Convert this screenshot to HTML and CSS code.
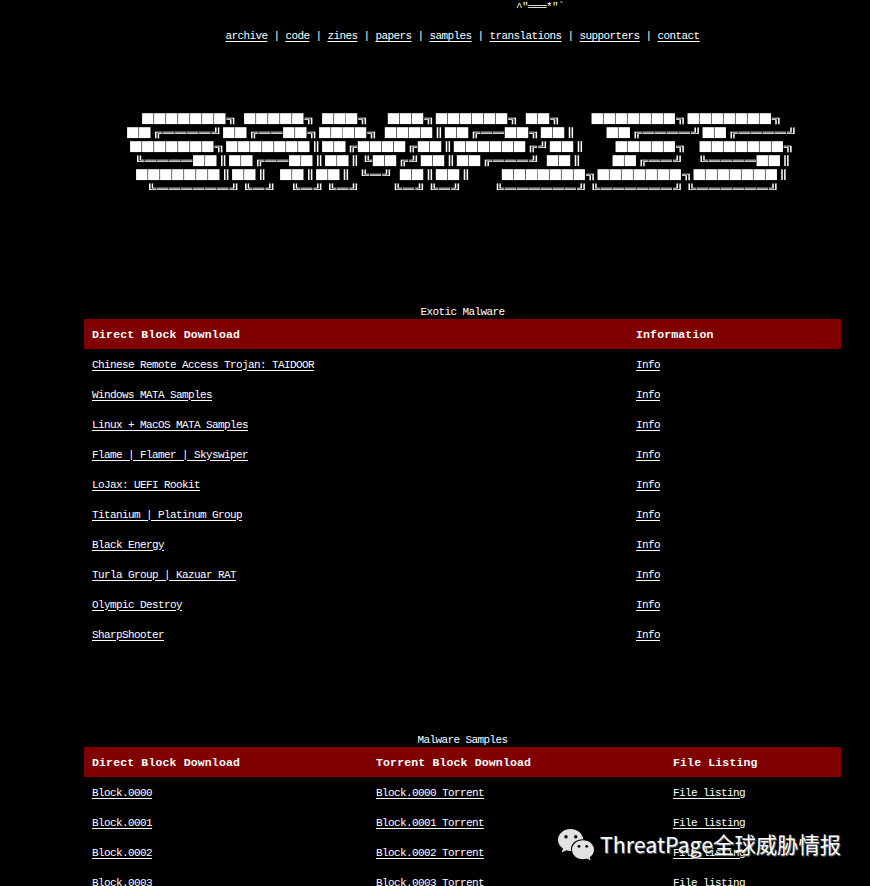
FILE: index.html
```html
<!DOCTYPE html>
<html lang="en">
<head>
<meta charset="utf-8">
<title>Samples</title>
<link rel="stylesheet" href="styles.css">
</head>
<body>
<main class="page">
<div class="ornament">^"═══*"`</div>
<nav class="nav"><a href="#">archive</a> | <a href="#">code</a> | <a href="#">zines</a> | <a href="#">papers</a> | <a href="#">samples</a> | <a href="#">translations</a> | <a href="#">supporters</a> | <a href="#">contact</a></nav>
<pre class="banner">███████╗ █████╗ ███╗   ███╗██████╗ ██╗     ███████╗███████╗
██╔════╝██╔══██╗████╗ ████║██╔══██╗██║     ██╔════╝██╔════╝
███████╗███████║██╔████╔██║██████╔╝██║     █████╗  ███████╗
╚════██║██╔══██║██║╚██╔╝██║██╔═══╝ ██║     ██╔══╝  ╚════██║
███████║██║  ██║██║ ╚═╝ ██║██║     ███████╗███████╗███████║
╚══════╝╚═╝  ╚═╝╚═╝     ╚═╝╚═╝     ╚══════╝╚══════╝╚══════╝</pre>
<table class="listing exotic">
<caption>Exotic Malware</caption>
<thead><tr><th class="wide">Direct Block Download</th><th>Information</th></tr></thead>
<tbody>
<tr><td><a href="#">Chinese Remote Access Trojan: TAIDOOR</a></td><td><a href="#">Info</a></td></tr>
<tr><td><a href="#">Windows MATA Samples</a></td><td><a href="#">Info</a></td></tr>
<tr><td><a href="#">Linux + MacOS MATA Samples</a></td><td><a href="#">Info</a></td></tr>
<tr><td><a href="#">Flame | Flamer | Skyswiper</a></td><td><a href="#">Info</a></td></tr>
<tr><td><a href="#">LoJax: UEFI Rookit</a></td><td><a href="#">Info</a></td></tr>
<tr><td><a href="#">Titanium | Platinum Group</a></td><td><a href="#">Info</a></td></tr>
<tr><td><a href="#">Black Energy</a></td><td><a href="#">Info</a></td></tr>
<tr><td><a href="#">Turla Group | Kazuar RAT</a></td><td><a href="#">Info</a></td></tr>
<tr><td><a href="#">Olympic Destroy</a></td><td><a href="#">Info</a></td></tr>
<tr><td><a href="#">SharpShooter</a></td><td><a href="#">Info</a></td></tr>
</tbody>
</table>
<table class="listing">
<caption>Malware Samples</caption>
<thead><tr><th class="block">Direct Block Download</th><th class="torrent">Torrent Block Download</th><th>File Listing</th></tr></thead>
<tbody>
<tr><td><a href="#">Block.0000</a></td><td><a href="#">Block.0000 Torrent</a></td><td><a href="#">File listing</a></td></tr>
<tr><td><a href="#">Block.0001</a></td><td><a href="#">Block.0001 Torrent</a></td><td><a href="#">File listing</a></td></tr>
<tr><td><a href="#">Block.0002</a></td><td><a href="#">Block.0002 Torrent</a></td><td><a href="#">File listing</a></td></tr>
<tr><td><a href="#">Block.0003</a></td><td><a href="#">Block.0003 Torrent</a></td><td><a href="#">File listing</a></td></tr>
</tbody>
</table>
</main>
<div class="watermark">
<svg class="wechat" viewBox="0 0 36 32" width="36" height="32">
<path fill="#e2e2e2" d="M12.700 0C5.700 0 0 4.800 0 11c0 3.500 1.900 6.500 5 8.600L3.800 23.500l4.500-2.300c1.500.5 3 .8 5 .7C11.800 15.500 17 10.200 25.400 10.300 24.200 4.200 19 0 12.700 0z"/>
<path fill="#e2e2e2" d="M25 11.200c-6.200 0-11 4.200-11 9.500s4.900 9.500 11 9.500c1.300 0 2.600-.2 3.800-.6l3.900 2-1-3.300c2.600-1.800 4.300-4.400 4.300-7.600 0-5.300-4.900-9.500-11-9.500z"/>
<g fill="#000"><circle cx="8" cy="7.700" r="1.700"/><circle cx="17.700" cy="7.700" r="1.700"/><circle cx="21" cy="17.300" r="1.400"/><circle cx="28.700" cy="17.300" r="1.400"/></g>
</svg>
<span class="mark-text">ThreatPage全球威胁情报</span>
</div>
</body>
</html>
```
FILE: styles.css
```css
* { box-sizing: border-box; }
html { background: #000; }
body {
  margin: 0;
  height: 886px;
  overflow: hidden;
  position: relative;
  background: #000;
  color: #fff;
  font: 11px/14px "Liberation Mono", monospace;
  letter-spacing: -0.6px;
}
a { color: #fff; text-decoration: underline; text-underline-offset: 2px; text-decoration-thickness: 1px; }
.page { width: 757px; margin-left: 84px; }
.ornament { height: 14px; padding-left: 432px; white-space: pre; }
.nav { margin-top: 14px; height: 14px; padding-top: 1px; text-align: center; }
.banner {
  width: 378px;
  margin: 70px auto 0;
  height: 84px;
  text-align: center;
  font: 9.14px/14px "DejaVu Sans Mono", monospace;
  letter-spacing: 0.5px;
  word-spacing: -3px;
  transform: scaleX(2);
  will-change: transform;
}
.listing {
  width: 757px;
  border-collapse: collapse;
  table-layout: fixed;
  margin-top: 84px;
}
.exotic { margin-top: 109px; }
.listing caption { height: 14px; line-height: 14px; }
.listing th, .listing td { height: 30px; padding: 1px 8px 0; text-align: left; vertical-align: middle; }
.listing th { background: #800000; font-size: 11.5px; letter-spacing: 0.15px; }
.wide { width: 544px; }
.block { width: 284px; }
.torrent { width: 297px; }
.watermark {
  position: absolute;
  left: 558px;
  top: 829px;
  display: flex;
  gap: 6px;
  font: 21.35px/29px "Noto Sans CJK SC", sans-serif;
  letter-spacing: 0;
  white-space: nowrap;
  text-shadow: 1px 1px 1px #777;
}
.wechat { flex: none; }
```
